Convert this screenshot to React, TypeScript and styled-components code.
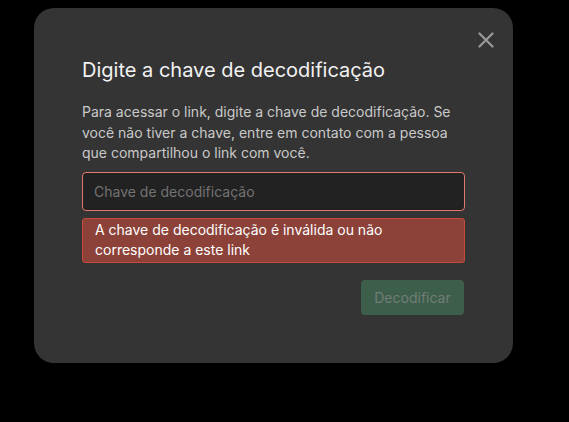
import styled, { createGlobalStyle } from 'styled-components';

const GlobalStyle = createGlobalStyle`
    html, body {
        margin: 0;
        background: #000;
    }
    body {
        font-family: Inter, "Noto Sans", sans-serif;
    }
`;

const Page = styled.div`
    width: 569px;
    height: 422px;
    padding: 8px 0 0 34px;
    box-sizing: border-box;
`;

const Modal = styled.div`
    position: relative;
    width: 479px;
    box-sizing: border-box;
    padding: 48px;
    background: #343434;
    border-radius: 20px;
    display: flex;
    flex-direction: column;
`;

const CloseButton = styled.button`
    position: absolute;
    top: 16px;
    right: 11px;
    width: 32px;
    height: 32px;
    padding: 0;
    border: none;
    background: none;
    display: flex;
    align-items: center;
    justify-content: center;
    cursor: pointer;
`;

const Title = styled.h2`
    margin: 0;
    font-size: 20px;
    font-weight: 400;
    line-height: 28px;
    color: #f2f2f2;
`;

const Description = styled.p`
    margin: 18px 0 0;
    font-size: 14px;
    line-height: 20.5px;
    color: #c9c9c9;
`;

const KeyInput = styled.input`
    margin-top: 8px;
    height: 39px;
    box-sizing: border-box;
    padding: 0 11px;
    background: #222222;
    border: 1px solid #e2776c;
    border-radius: 4px;
    color: #e0e0e0;
    font-family: inherit;
    font-size: 14px;
    outline: none;
    &::placeholder {
        color: #737373;
    }
`;

const ErrorBox = styled.div`
    margin-top: 7px;
    box-sizing: border-box;
    padding: 1px 12px 2px;
    background: #8c4239;
    border: 1px solid #c8493b;
    border-radius: 3px;
    color: #ffffff;
    font-size: 14px;
    line-height: 20px;
`;

const Actions = styled.div`
    margin-top: 17px;
    display: flex;
    justify-content: flex-end;
`;

const SubmitButton = styled.button`
    height: 35px;
    width: 103px;
    padding: 0;
    margin-right: 1px;
    background: #3e5e4c;
    border: none;
    border-radius: 4px;
    color: #6f7d74;
    font-family: inherit;
    font-size: 14px;
    cursor: not-allowed;
`;

function App() {
    return (
        <Page>
            <GlobalStyle />
            <Modal>
                <CloseButton aria-label="Fechar">
                    <svg width="16" height="16" viewBox="0 0 16 16">
                        <path
                            d="M1.5 1.5 L14.5 14.5 M14.5 1.5 L1.5 14.5"
                            stroke="#9a9a9a"
                            strokeWidth="2.2"
                            strokeLinecap="round"
                        />
                    </svg>
                </CloseButton>
                <Title>Digite a chave de decodificação</Title>
                <Description>
                    Para acessar o link, digite a chave de decodificação. Se
                    você não tiver a chave, entre em contato com a pessoa
                    que compartilhou o link com você.
                </Description>
                <KeyInput placeholder="Chave de decodificação" />
                <ErrorBox>
                    A chave de decodificação é inválida ou não corresponde a
                    este link
                </ErrorBox>
                <Actions>
                    <SubmitButton disabled>Decodificar</SubmitButton>
                </Actions>
            </Modal>
        </Page>
    );
}

export default App;
